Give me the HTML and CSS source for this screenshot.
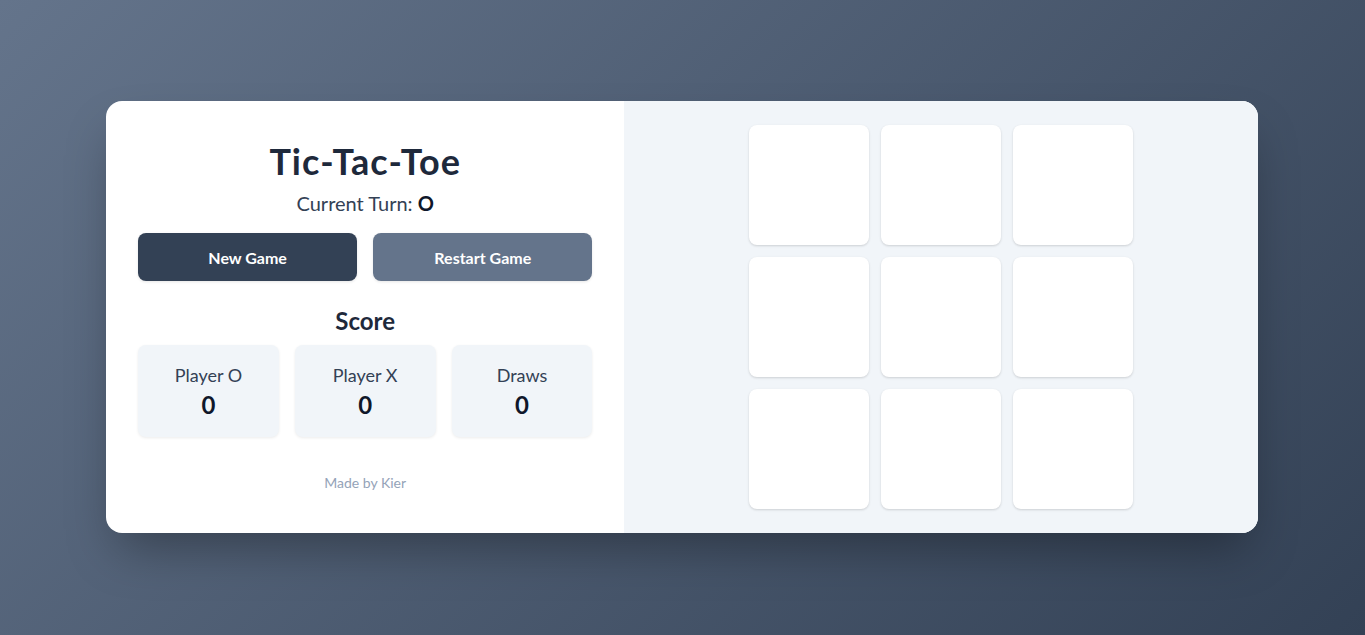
FILE: index.html
```html
<!DOCTYPE html>
<html lang="en">
<head>
<meta charset="utf-8">
<title>Tic-Tac-Toe</title>
<link rel="stylesheet" href="styles.css">
</head>
<body>
<main class="card">
  <section class="info">
    <h1 class="title">Tic-Tac-Toe</h1>
    <p class="turn">Current Turn: <strong>O</strong></p>
    <div class="buttons">
      <button class="btn btn-dark">New Game</button>
      <button class="btn btn-light">Restart Game</button>
    </div>
    <h2 class="score-title">Score</h2>
    <div class="scores">
      <div class="score"><div class="label">Player O</div><div class="value">0</div></div>
      <div class="score"><div class="label">Player X</div><div class="value">0</div></div>
      <div class="score"><div class="label">Draws</div><div class="value">0</div></div>
    </div>
    <p class="credit">Made by Kier</p>
  </section>
  <section class="board-wrap">
    <div class="board">
      <div class="cell"></div><div class="cell"></div><div class="cell"></div>
      <div class="cell"></div><div class="cell"></div><div class="cell"></div>
      <div class="cell"></div><div class="cell"></div><div class="cell"></div>
    </div>
  </section>
</main>
</body>
</html>
```
FILE: styles.css
```css
* { box-sizing: border-box; }
html, body { height: 100%; }
body {
  margin: 0;
  min-height: 100vh;
  padding: 0 1px 1px 0;
  display: flex;
  align-items: center;
  justify-content: center;
  background: linear-gradient(135deg, #64748b 0%, #334155 100%);
  font-family: Lato, "Noto Sans", sans-serif;
}
.card {
  width: 1152px;
  display: grid;
  grid-template-columns: 45% 55%;
  background: #fff;
  border-radius: 16px;
  overflow: hidden;
  box-shadow: 0 25px 50px -12px rgba(0,0,0,0.35);
}
.info {
  padding: 32px;
  display: flex;
  flex-direction: column;
  justify-content: center;
  text-align: center;
}
.title {
  margin: 0 0 8px;
  font-size: 36px;
  line-height: 40px;
  font-weight: 700;
  letter-spacing: 1px;
  color: #1e293b;
}
.turn {
  margin: 0 0 16px;
  font-size: 20px;
  line-height: 28px;
  color: #334155;
}
.turn strong { color: #0f172a; }
.buttons {
  display: grid;
  grid-template-columns: 1fr 1fr;
  gap: 16px;
}
.btn {
  height: 48px;
  border: 0;
  border-radius: 8px;
  font-family: inherit;
  font-size: 16px;
  font-weight: 700;
  color: #fff;
  box-shadow: 0 1px 3px rgba(0,0,0,0.1);
}
.btn-dark { background: #334155; }
.btn-light { background: #64748b; }
.score-title {
  margin: 24px 0 8px;
  font-size: 24px;
  line-height: 32px;
  font-weight: 700;
  color: #1e293b;
}
.scores {
  display: grid;
  grid-template-columns: repeat(3, 1fr);
  gap: 16px;
}
.score {
  background: #f1f5f9;
  border-radius: 8px;
  padding: 16px;
  box-shadow: 0 1px 3px rgba(0,0,0,0.08);
}
.label {
  font-size: 18px;
  line-height: 28px;
  color: #334155;
}
.value {
  font-size: 24px;
  line-height: 32px;
  font-weight: 700;
  color: #0f172a;
}
.credit {
  margin: 36px 0 0;
  font-size: 14px;
  line-height: 20px;
  color: #94a3b8;
}
.board-wrap {
  background: #f1f5f9;
  padding: 24px;
  display: flex;
  justify-content: center;
  align-items: center;
}
.board {
  display: grid;
  grid-template-columns: repeat(3, 120px);
  grid-auto-rows: 120px;
  gap: 12px;
}
.cell {
  background: #fff;
  border-radius: 8px;
  box-shadow: 0 1px 3px rgba(0,0,0,0.1), 0 1px 2px rgba(0,0,0,0.06);
}
```
